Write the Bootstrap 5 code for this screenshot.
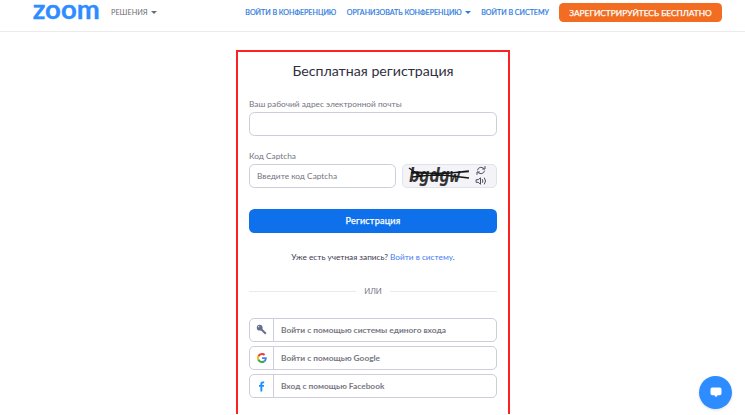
<!DOCTYPE html>
<html lang="ru">
<head>
<meta charset="utf-8">
<meta name="viewport" content="width=device-width, initial-scale=1">
<title>Бесплатная регистрация</title>
<link href="https://cdn.jsdelivr.net/npm/bootstrap@5.3.0/dist/css/bootstrap.min.css" rel="stylesheet">
<style>
body{font-family:Lato,"Open Sans",sans-serif;font-size:8px;line-height:12px;color:#3c3c50;height:415px;overflow:hidden;background:#fff}
a{text-decoration:none}
.topbar{height:32px;border-bottom:1px solid #ebebed;padding:0 23px 7px 33px;font-size:7.1px;white-space:nowrap}
.brand-logo{width:66px;height:23px;display:block;overflow:visible}
.solutions{color:#6c6c72;margin-left:12px;font-size:7.3px;padding-top:1px}
.toplinks a{color:#2d7be0;-webkit-text-stroke:.2px #2d7be0;padding-top:1px}
.toplinks a+a{margin-left:10.500px}
.caret{display:inline-block;border:3px solid transparent;border-top-color:currentColor;border-bottom:0;margin-left:3px;vertical-align:1px}
.toplinks a.signup{background:#f26d21;color:#fff;border-radius:4.5px;width:163px;height:19px;line-height:18px;font-size:8.35px;-webkit-text-stroke:.25px #fff;margin-left:10px}
.frame{width:274px;height:364px;border:2px solid #fc2222;border-bottom:0;margin:18px 0 0 235.5px;padding:10px 10.5px 0 11.5px}
h1{font-size:14.2px;line-height:18px;font-weight:400;color:#30303f;margin:0 0 18px}
.form-label{display:block;color:#74747f;font-size:8.3px;line-height:12px;margin:0 0 2px}
.captcha-label{margin-top:14px}
.form-control{height:24px;border:1px solid #cdcddb;border-radius:5.5px;font-size:8.3px;padding:0 7px;color:#555}
.form-control::placeholder{color:#74747f}
.captcha{width:95px;height:24px;background:#f3f3f8;border:1px solid #e2e2ec;border-radius:5px;flex:none;margin-left:6px}
.register{height:24px;background:#0e71eb;border-radius:5.5px;color:#fff;font-size:9.1px;-webkit-text-stroke:.25px #fff;font-weight:400;letter-spacing:.2px;line-height:24px;padding:0;border:0;margin-top:21px}
.signin{margin-top:18px;font-size:8.25px}
.signin a{color:#3f7bf2}
.divider{margin-top:22px;color:#74747f;font-size:7.8px}
.divider i{height:1px;background:#e9e9ec;flex:1}
.sso-list{margin-top:20.500px}
.sso{height:24px;border:1px solid #cdcddb;border-radius:5px;color:#777783;font-weight:700;font-size:8.33px;margin-bottom:4.3px}
.sso span{width:24px;height:100%;border-right:1px solid #cdcddb;margin-right:7px}
.chat{position:fixed;left:699px;top:376px;width:33px;height:33px;border-radius:50%;background:#2d8cff;box-shadow:0 1px 3px #0002;border:0;padding:0}
</style>
<script src="https://cdn.jsdelivr.net/npm/bootstrap@5.3.0/dist/js/bootstrap.bundle.min.js"></script>
</head>
<body>
<header class="topbar d-flex align-items-center">
<svg class="brand-logo" viewBox="0 0 66 23" role="img" aria-label="zoom"><text x="-.3" y="18.400" textLength="67" lengthAdjust="spacingAndGlyphs" font-family="Lato" font-size="26" font-weight="700" fill="#2d8cff" stroke="#2d8cff" stroke-width=".3">zoom</text></svg>
<a class="solutions" href="#">РЕШЕНИЯ<b class="caret"></b></a>
<nav class="toplinks d-flex align-items-center ms-auto">
<a href="#">ВОЙТИ В КОНФЕРЕНЦИЮ</a>
<a href="#">ОРГАНИЗОВАТЬ КОНФЕРЕНЦИЮ<b class="caret"></b></a>
<a href="#">ВОЙТИ В СИСТЕМУ</a>
<a class="signup text-center" href="#">ЗАРЕГИСТРИРУЙТЕСЬ БЕСПЛАТНО</a>
</nav>
</header>
<main class="frame">
<h1 class="text-center">Бесплатная регистрация</h1>
<label class="form-label" for="mail">Ваш рабочий адрес электронной почты</label>
<input class="form-control" id="mail" type="email">
<label class="form-label captcha-label" for="code">Код Captcha</label>
<div class="d-flex">
<input class="form-control" id="code" placeholder="Введите код Captcha">
<svg class="captcha" viewBox="0 0 93 22">
<text x="6" y="16.500" textLength="51" lengthAdjust="spacingAndGlyphs" font-family="DejaVu Sans Mono" font-size="19" font-style="italic" font-weight="700" fill="#333">bgdgw</text>
<g fill="none" stroke="#151515" stroke-width="1.300"><path d="M8 7.500q28 2 58-1M9 12l57-6M14 7l52 6M6 3l13 9"/></g>
<g fill="none" stroke="#4d4d60" stroke-width="1" stroke-linecap="round" stroke-linejoin="round"><path d="M74.500 5a3.700 3.300 0 0 1 6.500-1.500M82 1.500V4h-2.500M81.500 6a3.700 3.300 0 0 1-6.500 1.500M74 9.500V7h2.500"/><path d="M73.500 14.700h1.700l2.300-1.900v6.400l-2.300-1.900h-1.700zM79.500 14.500q1 1.500 0 3M81.500 13q2.300 3 0 6"/></g>
</svg>
</div>
<button class="register btn w-100 d-block">Регистрация</button>
<p class="signin text-center mb-0">Уже есть учетная запись? <a href="#">Войти в систему</a>.</p>
<div class="divider d-flex align-items-center"><i></i><span class="px-2">ИЛИ</span><i></i></div>
<div class="sso-list">
<a class="sso d-flex align-items-center" href="#"><span class="d-flex align-items-center justify-content-center"><svg width="11" height="11" viewBox="0 0 11 11"><circle cx="3.700" cy="3.700" r="2.900" fill="#66708a"/><circle cx="2.700" cy="2.700" r=".6" fill="#fff"/><path d="M5 5l4.800 4.700M7.300 8.500l1-1" stroke="#66708a" stroke-width="2"/></svg></span>Войти с помощью системы единого входа</a>
<a class="sso d-flex align-items-center" href="#"><span class="d-flex align-items-center justify-content-center"><svg width="10" height="10" viewBox="0 0 48 48"><path fill="#ea4335" d="M24 9.500c3.500 0 6.700 1.200 9.200 3.600l6.800-6.800C36 2.400 30.500 0 24 0 14.600 0 6.500 5.400 2.600 13.200l8 6.200C12.400 13.700 17.700 9.500 24 9.500z"/><path fill="#4285f4" d="M47 24.500c0-1.600-.2-3.100-.4-4.500H24v9h13c-.6 3-2.300 5.500-4.800 7.200l7.700 6C44.400 38 47 32 47 24.500z"/><path fill="#fbbc05" d="M10.500 28.600a14.500 14.500 0 0 1 0-9.200l-8-6.200a24 24 0 0 0 0 21.600z"/><path fill="#34a853" d="M24 48c6.500 0 12-2.100 15.900-5.800l-7.700-6c-2.200 1.500-4.900 2.300-8.200 2.300-6.300 0-11.600-4.200-13.500-9.900l-8 6.200C6.500 42.600 14.600 48 24 48z"/></svg></span>Войти с помощью Google</a>
<a class="sso d-flex align-items-center" href="#"><span class="d-flex align-items-center justify-content-center"><svg width="6" height="11" viewBox="0 0 6 11"><path fill="#1890ff" d="M1.400 10.500V5.800H0V4h1.400V2.800C1.400 1.200 2.300.500 3.700.500h1.500v1.700H4.200c-.6 0-.9.300-.9.900V4h1.900l-.3 1.800H3.300v4.700z"/></svg></span>Вход с помощью Facebook</a>
</div>
</main>
<button class="chat d-flex align-items-center justify-content-center" aria-label="Чат"><svg width="12" height="11" viewBox="0 0 12 11"><path fill="#fff" d="M2.200.500h7.600q1.700 0 1.700 1.700v4.300q0 1.700-1.700 1.700H7.700L6 10.300 4.300 8.200H2.200Q.5 8.200.5 6.500V2.200Q.5.500 2.200.500z"/></svg></button>
</body>
</html>
